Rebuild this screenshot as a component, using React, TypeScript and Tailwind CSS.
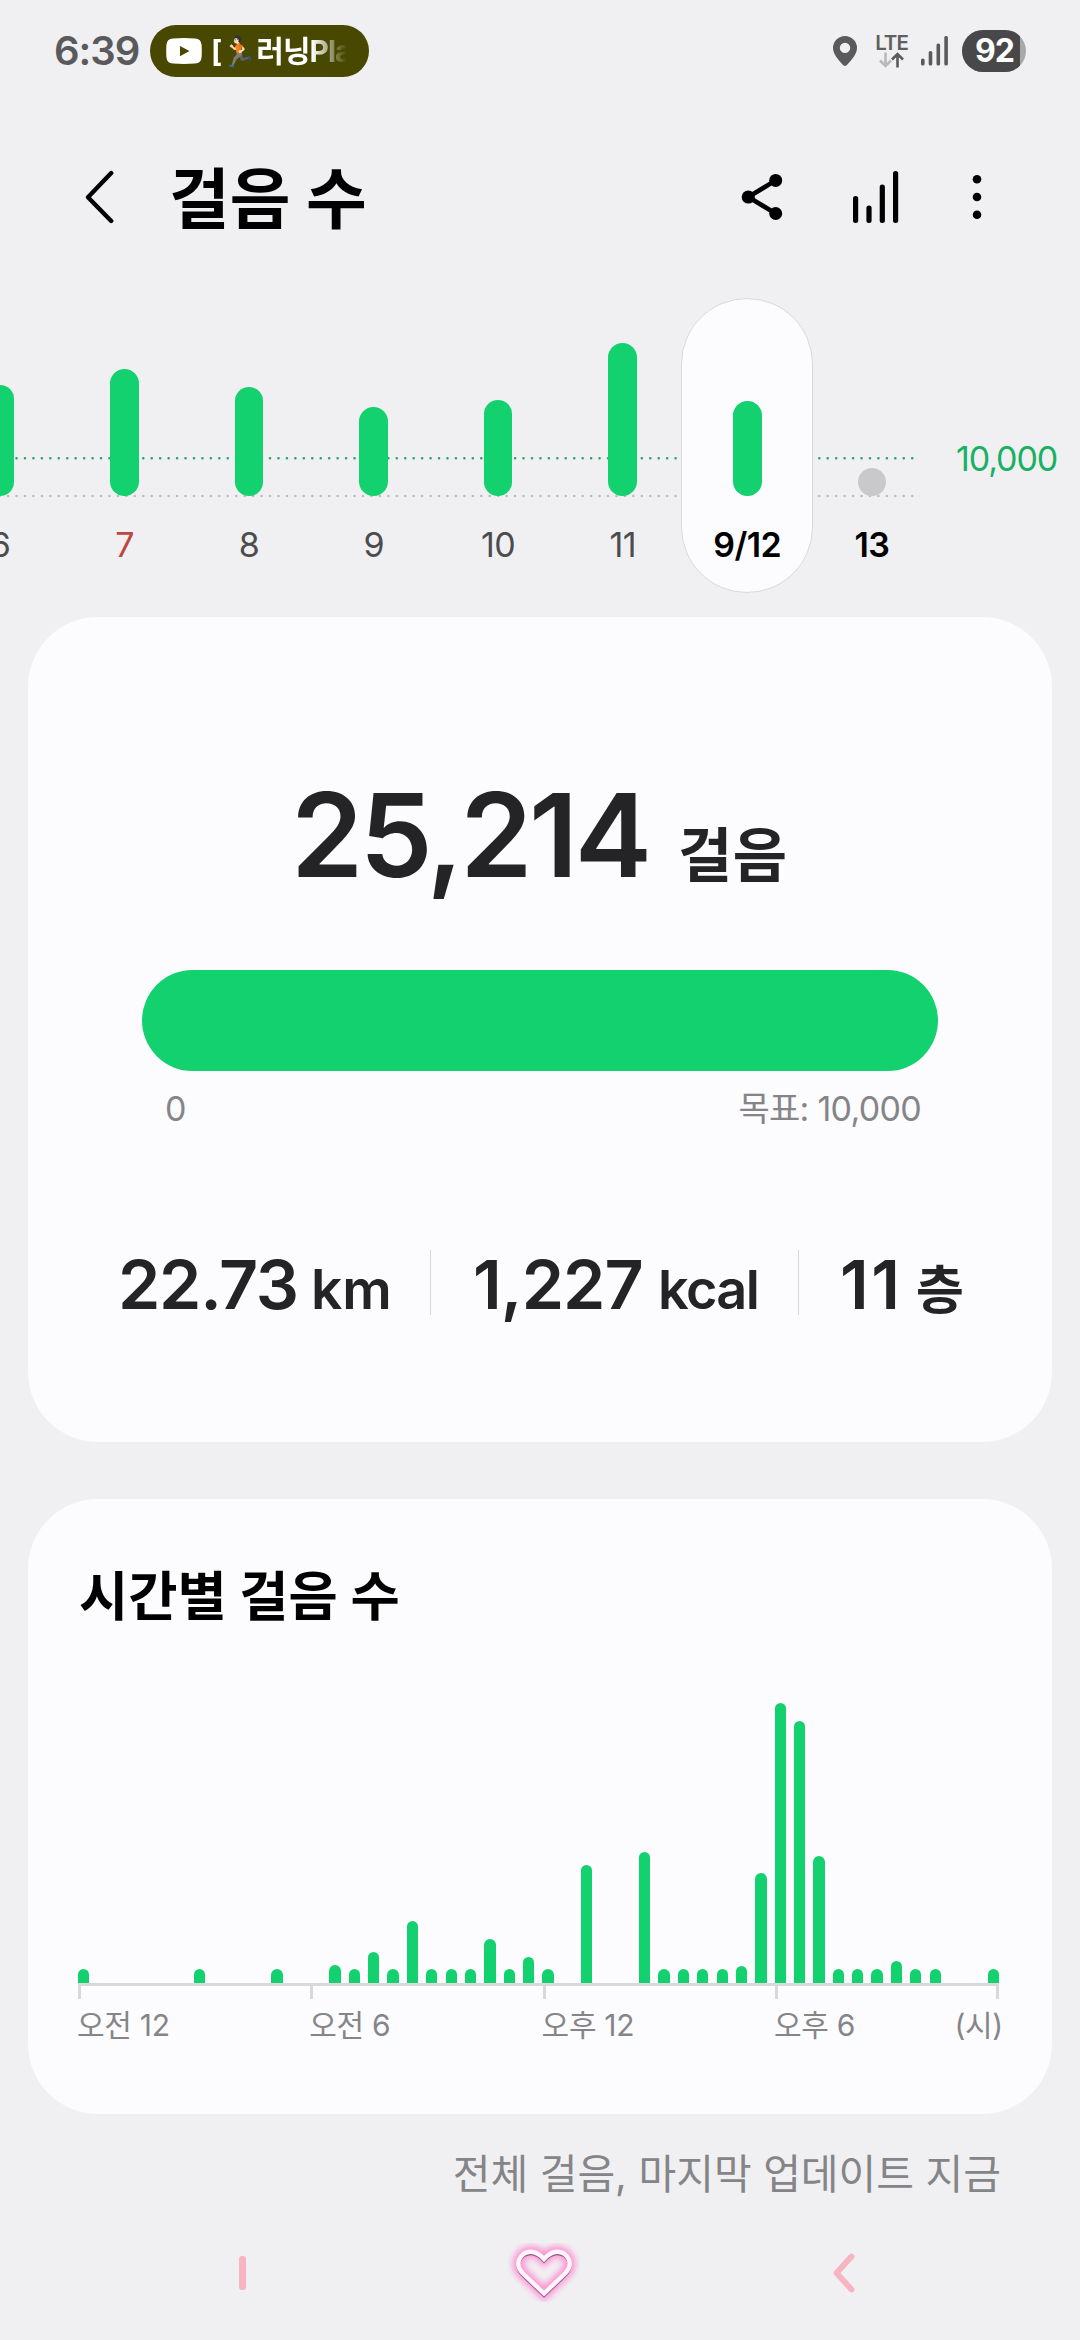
import React from "react";

type Day = { label: string; height: number; tone?: "sunday" | "selected" | "today" };

const DAYS: Day[] = [
  { label: "6", height: 111 },
  { label: "7", height: 127, tone: "sunday" },
  { label: "8", height: 109 },
  { label: "9", height: 89 },
  { label: "10", height: 96 },
  { label: "11", height: 153 },
  { label: "9/12", height: 95, tone: "selected" },
  { label: "13", height: 28.5, tone: "today" },
];

// Half-hour slots of the day, bar heights in pixels.
const SLOTS: number[] = [
  14, 0, 0, 0, 0, 0, 14, 0, 0, 0, 14, 0,
  0, 18, 14, 31, 14, 62, 14, 14, 14, 44, 14, 26,
  14, 0, 118, 0, 0, 131, 14, 14, 14, 14, 17, 110.5,
  280, 262, 127, 14, 14, 14, 21.7, 14, 14, 0, 0, 14,
];

function StatusBar() {
  return (
    <div className="flex h-[102px] shrink-0 items-center pl-[54px] pr-[54px]">
      <span className="w-[96px] text-[40px] leading-none font-semibold tracking-[-1px] text-[#5a5a5c]">6:39</span>
      <div className="flex h-[52px] w-[219px] items-center rounded-full bg-[#484800] pl-[16px]">
        <svg className="h-[26px] w-[36px] shrink-0" viewBox="0 0 36 26">
          <path d="M7 .4Q18-.4 29 .4Q35.200 .8 35.600 7Q36 13 35.600 19Q35.200 25.200 29 25.600Q18 26.400 7 25.600Q.8 25.200 .4 19Q0 13 .4 7Q.8 .8 7 .4Z" fill="#fff" />
          <path d="M14 8L23.500 13L14 18.200Z" fill="#484800" />
        </svg>
        <div className="ml-[9px] flex w-[140px] items-center overflow-hidden text-[30px] leading-[46px] font-bold whitespace-nowrap text-white [mask-image:linear-gradient(to_right,#000_72%,transparent_97%)]">
          <span>[</span>
          <span className="mr-[-1px] ml-[-2px] text-[30px] font-normal">🏃🏻</span>
          <span className="tracking-[-1px]">러닝Pla</span>
        </div>
      </div>
      <svg className="ml-auto h-[30px] w-[24px]" viewBox="0 0 24 30">
        <path d="M12 0A12 12 0 0 0 0 12C0 18 5.500 24 10.300 29.200Q12 30.800 13.700 29.200C18.500 24 24 18 24 12A12 12 0 0 0 12 0ZM12 6.700A5.200 5.200 0 1 1 12 17.100A5.200 5.200 0 0 1 12 6.700Z" fill="#5a5a5c" fillRule="evenodd" />
      </svg>
      <div className="ml-[18px] flex w-[33px] flex-col items-center">
        <span className="text-[20.5px] leading-[18px] font-semibold tracking-[-1px] text-[#5f5f61]">LTE</span>
        <svg className="h-[16px] w-[26px]" viewBox="0 0 26 16" fill="none" strokeWidth="2.6">
          <path d="M6.500 .5V13.500M1 8.500L6.500 14L12 8.500" stroke="#b8b8ba" />
          <path d="M18.500 15.500V2M13 7.500L18.500 2L24 7.500" stroke="#5a5a5c" />
        </svg>
      </div>
      <svg className="ml-[13px] h-[30px] w-[28px]" viewBox="0 0 28 30" fill="#5a5a5c">
        <rect x="0" y="22.500" width="3.600" height="7" rx="1.600" />
        <rect x="7.700" y="15" width="3.600" height="14.500" rx="1.600" />
        <rect x="15.500" y="7.500" width="3.600" height="22" rx="1.600" />
        <rect x="23.300" y="0" width="3.600" height="29.500" rx="1.600" />
      </svg>
      <div className="ml-[13px] h-[42px] w-[64px] overflow-hidden rounded-full bg-[#a8a8aa]">
        <div className="flex h-full w-[58px] items-center justify-end bg-[#48484a] pr-[6px] text-[32px] leading-none font-bold tracking-[-1px] text-white">92</div>
      </div>
    </div>
  );
}

function Header() {
  return (
    <div className="flex h-[190px] shrink-0 items-center pl-[85px]">
      <svg className="h-[54px] w-[30px]" viewBox="0 0 30 54" fill="none">
        <path d="M26.200 3L3 27.200L26.200 51" stroke="#000" strokeWidth="4.400" strokeLinecap="round" strokeLinejoin="round" />
      </svg>
      <h1 className="ml-[54px] pt-[4px] text-[66px] leading-none font-bold">걸음 수</h1>
      <svg className="ml-auto h-[48px] w-[42px]" viewBox="0 0 42 48">
        <path d="M34.700 7.400L7.300 24L34.700 40.500" fill="none" stroke="#000" strokeWidth="4.600" />
        <circle cx="7.300" cy="24" r="6.600" />
        <circle cx="34.700" cy="7.400" r="6.500" />
        <circle cx="34.700" cy="40.500" r="6.500" />
      </svg>
      <svg className="ml-[70px] h-[54px] w-[48px]" viewBox="0 0 48 54">
        <rect x="0" y="26" width="5.200" height="27" rx="2.500" />
        <rect x="13.400" y="35.500" width="5.200" height="17.500" rx="2.500" />
        <rect x="26.700" y="14.500" width="5.200" height="38.500" rx="2.500" />
        <rect x="40" y="1" width="5.200" height="52" rx="2.500" />
      </svg>
      <svg className="mr-[98px] ml-[71px] h-[46px] w-[10px]" viewBox="0 0 10 46">
        <circle cx="5" cy="5.200" r="4.300" />
        <circle cx="5" cy="23" r="4.300" />
        <circle cx="5" cy="40.800" r="4.300" />
      </svg>
    </div>
  );
}

function DayColumn({ day }: { day: Day }) {
  const selected = day.tone === "selected";
  const labelTone =
    day.tone === "sunday"
      ? "text-[#bf4540]"
      : day.tone
        ? "font-semibold text-black"
        : "text-[#4c4c4e]";
  return (
    <div className="relative flex w-[124.56px] shrink-0 flex-col items-center">
      {selected && (
        <div className="absolute top-[6px] left-1/2 h-[295px] w-[132px] -translate-x-1/2 rounded-full border border-[#d9d9dc] bg-[#fcfcff]" />
      )}
      <div className="relative flex h-[204px] items-end">
        <div
          className={`w-[28.5px] rounded-full ${day.tone === "today" ? "bg-[#c9c9cb]" : "bg-[#12d16e]"}`}
          style={{ height: day.height }}
        />
      </div>
      <span className={`relative mt-[32px] text-[34px] leading-none tracking-[-0.6px] ${labelTone}`}>{day.label}</span>
    </div>
  );
}

function WeekStrip() {
  return (
    <div className="relative h-[325px] shrink-0 overflow-hidden">
      <svg className="absolute top-0 left-0 h-[325px] w-[920px]" viewBox="0 0 920 325" fill="none" strokeLinecap="round" strokeDasharray="0 8.450">
        <path d="M-0.370 166.300H913" stroke="#1fa866" strokeWidth="2.600" />
        <path d="M-0.370 204H913" stroke="#bdbdbf" strokeWidth="2.600" />
      </svg>
      <div className="-ml-[62.300px] flex">
        {DAYS.map((d) => (
          <DayColumn key={d.label} day={d} />
        ))}
        <span className="mt-[150px] ml-[22px] shrink-0 text-[34px] leading-none tracking-[-1.100px] text-[#18b164]">10,000</span>
      </div>
    </div>
  );
}

function SummaryCard() {
  return (
    <section className="mx-[28px] h-[825px] shrink-0 rounded-[70px] bg-[#fcfcff] pt-[160px] text-[#242427]">
      <div className="flex h-[116px] items-baseline pl-[263px] leading-none font-semibold whitespace-nowrap">
        <span className="w-[387px] text-[116px] tracking-[-3.400px]">25,214</span>
        <span className="text-[59px] tracking-[0.5px]">걸음</span>
      </div>
      <div className="mx-[114px] mt-[77px] h-[101px] rounded-full bg-[#12d16e]" />
      <div className="mt-[21px] mr-[131px] ml-[137px] flex justify-between text-[34px] leading-none tracking-[-0.700px] text-[#858588]">
        <span>0</span>
        <span>목표: 10,000</span>
      </div>
      <div className="mt-[124px] flex h-[65px] leading-none font-semibold whitespace-nowrap">
        <div className="flex w-[402px] items-baseline pl-[90px]">
          <span className="w-[193px] text-[68px] tracking-[-1.300px]">22.73</span>
          <span className="text-[55px]">km</span>
        </div>
        <div className="w-px bg-[#d6d6d9]" />
        <div className="flex w-[367px] items-baseline pl-[42px]">
          <span className="w-[185px] text-[68px] tracking-[-0.900px]">1,227</span>
          <span className="text-[54px] tracking-[-1.600px]">kcal</span>
        </div>
        <div className="w-px bg-[#d6d6d9]" />
        <div className="flex items-baseline pl-[41px]">
          <span className="w-[76px] text-[68px] tracking-[2.500px]">11</span>
          <span className="text-[52px]">층</span>
        </div>
      </div>
    </section>
  );
}

function HourlyCard() {
  return (
    <section className="mx-[28px] mt-[57px] h-[615px] shrink-0 rounded-[70px] bg-[#fcfcff] pt-[71px]">
      <h2 className="pl-[51px] text-[53.500px] leading-[53px] font-bold">시간별 걸음 수</h2>
      <div className="ml-[49.700px] flex h-[360px] items-end">
        {SLOTS.map((h, i) => (
          <div key={i} className="w-[19.370px] shrink-0">
            <div className="w-[11.300px] rounded-t-full bg-[#12d16e]" style={{ height: h }} />
          </div>
        ))}
      </div>
      <div className="mr-[53px] ml-[50px] flex h-[16px] border-t-[3px] border-[#d9d9dc]">
        <div className="w-[232.300px] border-l-[3px] border-[#d9d9dc]" />
        <div className="w-[232.300px] border-l-[3px] border-[#d9d9dc]" />
        <div className="w-[232.300px] border-l-[3px] border-[#d9d9dc]" />
        <div className="flex-1 border-x-[3px] border-[#d9d9dc]" />
      </div>
      <div className="mr-[49px] ml-[49px] mt-[11px] flex text-[30px] leading-none tracking-[-0.300px] whitespace-nowrap text-[#858588]">
        <span className="w-[232.300px]">오전 12</span>
        <span className="w-[232.300px]">오전 6</span>
        <span className="w-[232.300px]">오후 12</span>
        <span>오후 6</span>
        <span className="ml-auto">(시)</span>
      </div>
    </section>
  );
}

function NavBar() {
  return (
    <nav className="flex h-[145px] shrink-0 items-center pt-[11px]">
      <div className="ml-[239px] h-[34px] w-[7px] rounded-[3px] bg-[#f8b4c0]" />
      <svg className="ml-[248px] h-[100px] w-[100px]" viewBox="0 0 100 100" fill="none" strokeLinejoin="miter">
        <defs>
          <filter id="glow" x="-20%" y="-20%" width="140%" height="140%">
            <feGaussianBlur stdDeviation="3.400" />
          </filter>
          <filter id="shade" x="-20%" y="-20%" width="140%" height="140%">
            <feGaussianBlur stdDeviation="0.700" />
          </filter>
        </defs>
        <path d="M50 70.500L29.500 51C19 41 26.500 28.700 37 28.700C42 28.700 45 30.500 50 36C55 30.500 58 28.700 63 28.700C73.500 28.700 81 41 70.500 51Z" stroke="#ff86d0" strokeWidth="12" opacity=".85" filter="url(#glow)" />
        <path d="M50 72.300L29.500 52.800C19 42.800 26.500 30.500 37 30.500C42 30.500 45 32.300 50 37.800C55 32.300 58 30.500 63 30.500C73.500 30.500 81 42.800 70.500 52.800Z" stroke="#7d4a6c" strokeWidth="3.600" opacity=".85" filter="url(#shade)" />
        <path d="M50 70.500L29.500 51C19 41 26.500 28.700 37 28.700C42 28.700 45 30.500 50 36C55 30.500 58 28.700 63 28.700C73.500 28.700 81 41 70.500 51Z" stroke="#fff6fd" strokeWidth="4.400" />
      </svg>
      <svg className="ml-[237px] h-[42px] w-[26px]" viewBox="0 0 26 42" fill="none">
        <path d="M20.500 4.500L5.500 21L20.500 37.500" stroke="#f8b4c0" strokeWidth="5.800" strokeLinecap="round" strokeLinejoin="round" />
      </svg>
    </nav>
  );
}

export default function App() {
  return (
    <div className="flex h-[2340px] w-[1080px] flex-col overflow-hidden bg-[#f0f0f2] font-['Inter','Noto_Sans_CJK_KR',sans-serif] text-black">
      <StatusBar />
      <Header />
      <WeekStrip />
      <SummaryCard />
      <HourlyCard />
      <p className="mt-[40px] mr-[79px] h-[41px] shrink-0 text-right text-[41px] leading-none whitespace-nowrap text-[#858588]">
        전체 걸음, 마지막 업데이트 지금
      </p>
      <NavBar />
    </div>
  );
}
